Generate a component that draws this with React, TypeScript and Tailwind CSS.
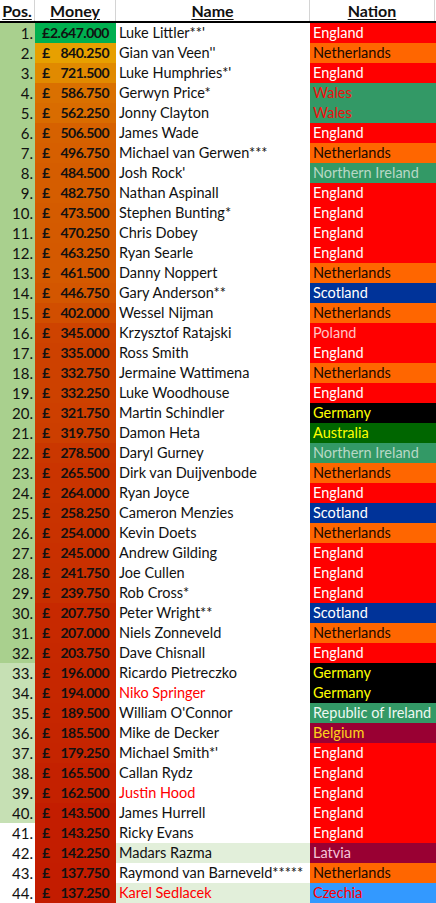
import React from 'react';

type Row = {
  pos: number;
  name: string;
  money: number;
  nation: string;
  redName?: boolean;
};

const rows: Row[] = [
  { pos: 1, name: "Luke Littler**'", money: 2647000, nation: 'England' },
  { pos: 2, name: "Gian van Veen''", money: 840250, nation: 'Netherlands' },
  { pos: 3, name: "Luke Humphries*'", money: 721500, nation: 'England' },
  { pos: 4, name: 'Gerwyn Price*', money: 586750, nation: 'Wales' },
  { pos: 5, name: 'Jonny Clayton', money: 562250, nation: 'Wales' },
  { pos: 6, name: 'James Wade', money: 506500, nation: 'England' },
  { pos: 7, name: 'Michael van Gerwen***', money: 496750, nation: 'Netherlands' },
  { pos: 8, name: "Josh Rock'", money: 484500, nation: 'Northern Ireland' },
  { pos: 9, name: 'Nathan Aspinall', money: 482750, nation: 'England' },
  { pos: 10, name: 'Stephen Bunting*', money: 473500, nation: 'England' },
  { pos: 11, name: 'Chris Dobey', money: 470250, nation: 'England' },
  { pos: 12, name: 'Ryan Searle', money: 463250, nation: 'England' },
  { pos: 13, name: 'Danny Noppert', money: 461500, nation: 'Netherlands' },
  { pos: 14, name: 'Gary Anderson**', money: 446750, nation: 'Scotland' },
  { pos: 15, name: 'Wessel Nijman', money: 402000, nation: 'Netherlands' },
  { pos: 16, name: 'Krzysztof Ratajski', money: 345000, nation: 'Poland' },
  { pos: 17, name: 'Ross Smith', money: 335000, nation: 'England' },
  { pos: 18, name: 'Jermaine Wattimena', money: 332750, nation: 'Netherlands' },
  { pos: 19, name: 'Luke Woodhouse', money: 332250, nation: 'England' },
  { pos: 20, name: 'Martin Schindler', money: 321750, nation: 'Germany' },
  { pos: 21, name: 'Damon Heta', money: 319750, nation: 'Australia' },
  { pos: 22, name: 'Daryl Gurney', money: 278500, nation: 'Northern Ireland' },
  { pos: 23, name: 'Dirk van Duijvenbode', money: 265500, nation: 'Netherlands' },
  { pos: 24, name: 'Ryan Joyce', money: 264000, nation: 'England' },
  { pos: 25, name: 'Cameron Menzies', money: 258250, nation: 'Scotland' },
  { pos: 26, name: 'Kevin Doets', money: 254000, nation: 'Netherlands' },
  { pos: 27, name: 'Andrew Gilding', money: 245000, nation: 'England' },
  { pos: 28, name: 'Joe Cullen', money: 241750, nation: 'England' },
  { pos: 29, name: 'Rob Cross*', money: 239750, nation: 'England' },
  { pos: 30, name: 'Peter Wright**', money: 207750, nation: 'Scotland' },
  { pos: 31, name: 'Niels Zonneveld', money: 207000, nation: 'Netherlands' },
  { pos: 32, name: 'Dave Chisnall', money: 203750, nation: 'England' },
  { pos: 33, name: 'Ricardo Pietreczko', money: 196000, nation: 'Germany' },
  { pos: 34, name: 'Niko Springer', money: 194000, nation: 'Germany', redName: true },
  { pos: 35, name: "William O'Connor", money: 189500, nation: 'Republic of Ireland' },
  { pos: 36, name: 'Mike de Decker', money: 185500, nation: 'Belgium' },
  { pos: 37, name: "Michael Smith*'", money: 179250, nation: 'England' },
  { pos: 38, name: 'Callan Rydz', money: 165500, nation: 'England' },
  { pos: 39, name: 'Justin Hood', money: 162500, nation: 'England', redName: true },
  { pos: 40, name: 'James Hurrell', money: 143500, nation: 'England' },
  { pos: 41, name: 'Ricky Evans', money: 143250, nation: 'England' },
  { pos: 42, name: 'Madars Razma', money: 142250, nation: 'Latvia' },
  { pos: 43, name: 'Raymond van Barneveld*****', money: 137750, nation: 'Netherlands' },
  { pos: 44, name: 'Karel Sedlacek', money: 137250, nation: 'Czechia', redName: true },
];

// fill + text colour per nation, like the sheet's conditional formats
const nationStyle: Record<string, string> = {
  England: 'bg-[#ff0000] text-white',
  Netherlands: 'bg-[#ff6600] text-[#1a0a00]',
  Wales: 'bg-[#339966] text-[#f01010]',
  'Northern Ireland': 'bg-[#339966] text-[#b8d8c6]',
  Scotland: 'bg-[#003399] text-white',
  Poland: 'bg-[#ff0000] text-[#ffc4c4]',
  Germany: 'bg-black text-[#ffff00]',
  Australia: 'bg-[#006600] text-[#ffff00]',
  'Republic of Ireland': 'bg-[#339966] text-[#eef8f2]',
  Belgium: 'bg-[#990033] text-[#ffd21a]',
  Latvia: 'bg-[#990033] text-[#f4c4d8]',
  Czechia: 'bg-[#3399ff] text-[#ff0000] border-b border-[#ff0000]',
};

const MIN = 137250;
const MAX = 2647000;

// colour scale on the money column
function moneyColor(v: number) {
  const t = (v - MIN) / (MAX - MIN);
  if (t > 0.5) return '#00b050';
  const r = Math.round(195 + 130 * t);
  const g = Math.round(28 + 471 * t);
  return `rgb(${Math.min(r, 255)}, ${Math.min(g, 255)}, 0)`;
}

const fmt = (v: number) => v.toLocaleString('de-DE');

function posBg(pos: number) {
  if (pos <= 32) return 'bg-[#a9d08e]';
  if (pos <= 40) return 'bg-[#c6e0b4]';
  return 'bg-white border-b border-[#d9d9d9]';
}

export default function App() {
  return (
    <div className="w-[436px] bg-white font-[Lato,'Liberation_Sans',sans-serif] text-[14.5px] leading-[20px] text-[#111]">
      {/* header */}
      <div className="grid grid-cols-[35px_81px_194px_126px] h-[23px] border-b-2 border-black font-bold text-[16px]">
        <div className="flex items-center justify-center border-r border-[#d4d4d4]">
          <span className="underline underline-offset-2">Pos.</span>
        </div>
        <div className="flex items-center justify-center border-r border-[#d4d4d4]">
          <span className="underline underline-offset-2">Money</span>
        </div>
        <div className="flex items-center justify-center border-r border-[#d4d4d4]">
          <span className="underline underline-offset-2">Name</span>
        </div>
        <div className="flex items-center justify-center border-r border-[#d4d4d4] mr-[1px]">
          <span className="underline underline-offset-2">Nation</span>
        </div>
      </div>

      {rows.map((r) => (
        <div key={r.pos} className="grid grid-cols-[35px_81px_194px_126px] h-[20px]">
          <div className={`text-right pr-[2px] text-[15px] ${posBg(r.pos)}`}>{r.pos}.</div>
          <div
            className="flex justify-between pl-[7px] pr-[7px] font-bold text-[14px] tracking-[-0.5px]"
            style={{ backgroundColor: moneyColor(r.money) }}
          >
            <span>£</span>
            <span>{fmt(r.money)}</span>
          </div>
          <div
            className={`pl-[3px] whitespace-nowrap ${
              r.pos === 42 || r.pos === 44 ? 'bg-[#e2efda]' : 'bg-white border-b border-[#d9d9d9]'
            } ${r.redName ? 'text-[#ff0000]' : ''}`}
          >
            {r.name}
          </div>
          <div className={`pl-[3px] whitespace-nowrap ${nationStyle[r.nation]}`}>{r.nation}</div>
        </div>
      ))}
    </div>
  );
}
